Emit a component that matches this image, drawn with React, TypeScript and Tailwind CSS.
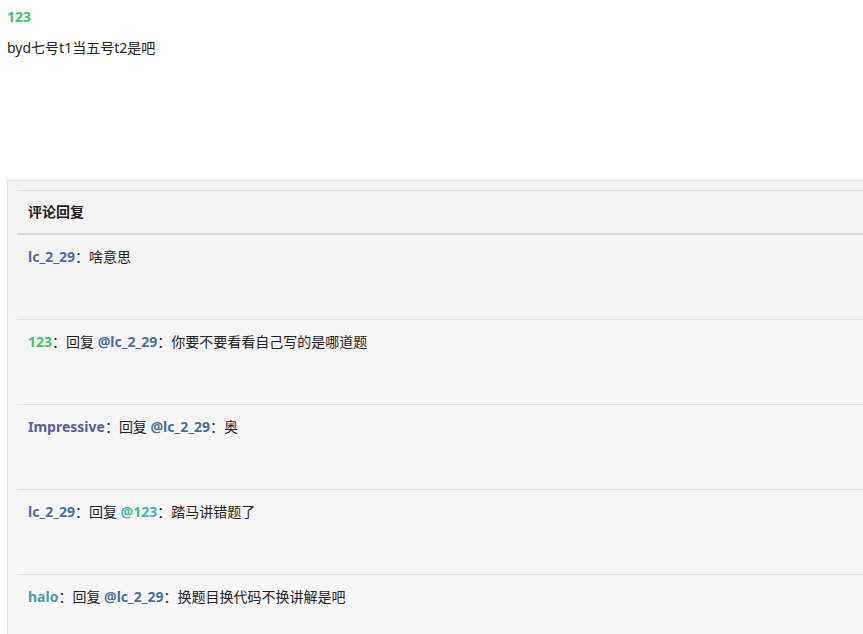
import React from "react";

const users: Record<string, string> = {
  lc: "text-[#4a6f9c]",
  green: "text-[#3cc36b]",
  impressive: "text-[#5a5ba0]",
  teal: "text-[#3fba9e]",
  halo: "text-[#4c98ab]",
};

const replies: { name: string; nameColor: string; to?: string; toColor?: string; body: string }[] = [
  { name: "lc_2_29", nameColor: users.lc, body: "啥意思" },
  { name: "123", nameColor: users.green, to: "@lc_2_29", toColor: users.lc, body: "你要不要看看自己写的是哪道题" },
  { name: "Impressive", nameColor: users.impressive, to: "@lc_2_29", toColor: users.lc, body: "奥" },
  { name: "lc_2_29", nameColor: users.lc, to: "@123", toColor: users.teal, body: "踏马讲错题了" },
  { name: "halo", nameColor: users.halo, to: "@lc_2_29", toColor: users.lc, body: "换题目换代码不换讲解是吧" },
];

export default function App() {
  return (
    <div
      className="h-[634px] w-[863px] overflow-hidden bg-white text-[14px] text-[#222]"
      style={{ fontFamily: '"Noto Sans", "Noto Sans CJK SC", sans-serif' }}
    >
      {/* Post */}
      <div className="px-[7px] pt-[7px]">
        <div className="text-[14px] font-bold leading-[20px] text-[#3cc36b]">123</div>
        <p className="mt-[11px] leading-[20px]">byd七号t1当五号t2是吧</p>
      </div>

      {/* Replies panel */}
      <div className="ml-[7px] mt-[122px] w-[900px] border border-[#e2e2e2] bg-gradient-to-b from-[#f3f3f3] to-[#f8f8f8] pl-[9px] pt-[9px] shadow-[0_0_2px_rgba(0,0,0,0.06)]">
        <div className="border-t border-[#dcdee6]">
          <div className="border-b-2 border-[#dadada] px-[11px] py-[11px] font-bold leading-[20px]">评论回复</div>
          {replies.map((r, i) => (
            <div key={i} className="h-[85px] border-b border-[#dedfe8] px-[11px] pt-[12px] leading-[20px]">
              <span className={`font-bold ${r.nameColor}`}>{r.name}</span>
              <span>：</span>
              {r.to && (
                <>
                  <span>回复 </span>
                  <span className={`font-bold ${r.toColor}`}>{r.to}</span>
                  <span>：</span>
                </>
              )}
              <span>{r.body}</span>
            </div>
          ))}
        </div>
      </div>
    </div>
  );
}
